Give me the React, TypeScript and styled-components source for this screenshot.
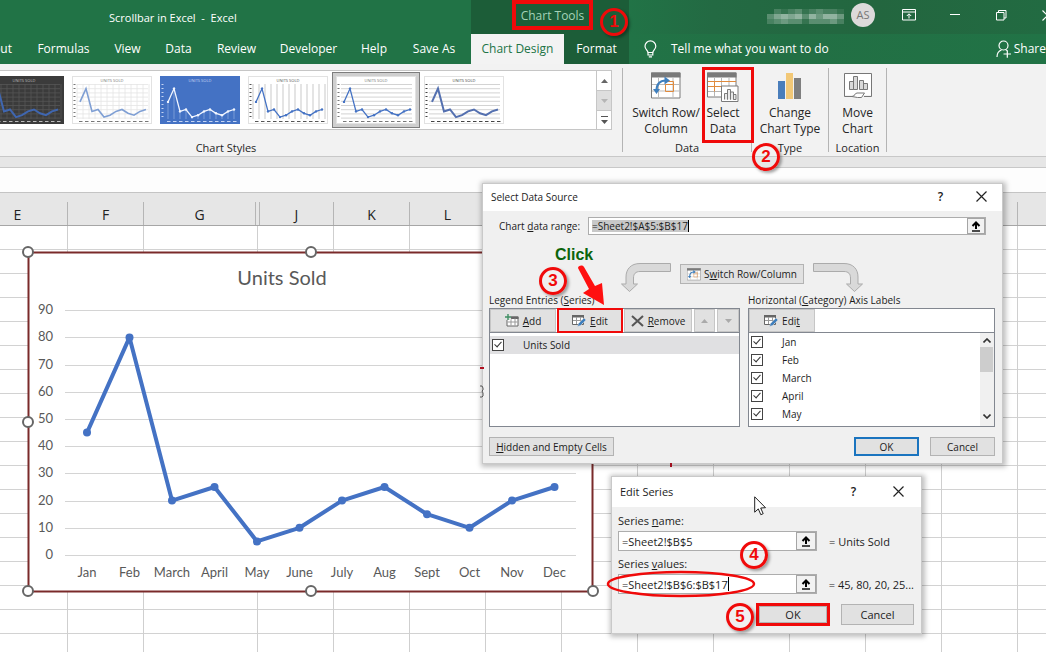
import React from 'react';
import styled, { createGlobalStyle, css } from 'styled-components';

const UI = '"Open Sans", "Noto Sans", sans-serif';
const RED = '#f00a0a';

const GlobalStyle = createGlobalStyle`
  *, *::before, *::after { box-sizing: border-box; }
  body { margin: 0; font-family: ${UI}; font-size: 12px; color: #262626; background: #fff; }
  button, input { font: inherit; color: inherit; margin: 0; }
  svg { display: block; flex: none; }
`;

const Page = styled.main`
  position: relative;
  display: flex;
  flex-direction: column;
  min-height: 100vh;
  overflow: hidden;
`;

/* ---------- title bar and tabs ---------- */

const Header = styled.header`
  display: grid;
  grid-template-columns: 471px 158px 1fr;
  grid-template-rows: 34px 30px;
  background: #217346;
  color: #fff;
`;

const DocTitle = styled.div`
  padding-left: 109px;
  font-size: 11px;
  line-height: 36px;
  white-space: pre;
`;

const ContextTitle = styled.div`
  background: #1c5d38;
  padding-left: 41px;
`;

const MarkedTitle = styled.div`
  width: 81px;
  height: 30px;
  border: 4px solid ${RED};
  color: #a5d3b7;
  font-size: 12px;
  line-height: 23px;
  text-align: center;
  white-space: nowrap;
`;

const WindowBar = styled.div`
  position: relative;
  display: flex;
  justify-content: flex-end;
  align-items: flex-start;
  background: linear-gradient(90deg, #217346, #236a43 20%, #23663f 60%, #226b42);
  overflow: hidden;
`;

const HiddenName = styled.div`
  display: grid;
  grid-template-columns: repeat(11, 7px);
  grid-auto-rows: 5px;
  margin: 9px 7px 0 0;
`;

const Pixel = styled.i<{ $a: number }>`
  background: rgba(255, 255, 255, ${p => p.$a / 12});
`;

const Avatar = styled.div`
  width: 24px;
  height: 24px;
  margin: 3px 11px 0 0;
  border-radius: 50%;
  background: #dcdada;
  color: #777;
  font-size: 11px;
  line-height: 24px;
  text-align: center;
`;

const WindowButtons = styled.div`
  display: flex;
  margin-right: -24px;
`;

const WindowButton = styled.button`
  display: grid;
  place-items: center;
  width: 46px;
  height: 30px;
  padding: 0;
  border: 0;
  background: none;
`;

const Tabs = styled.nav`
  display: grid;
  grid-template-columns: 25px 77px 51px 51px 65px 79px 52px 68px;
`;

const Tab = styled.button<{ $active?: boolean; $end?: boolean }>`
  padding: 0;
  border: 0;
  background: ${p => (p.$active ? '#f3f3f3' : 'none')};
  color: ${p => (p.$active ? '#217346' : '#fff')};
  font-size: 12px;
  line-height: 30px;
  text-align: center;
  white-space: nowrap;
  ${p => p.$end && css`direction: rtl; padding-right: 13px;`}
`;

const ContextTabs = styled.nav`
  display: grid;
  grid-template-columns: 93px 65px;
  background: #1c5d38;
`;

const TellRow = styled.div`
  display: flex;
  align-items: center;
  justify-content: space-between;
  padding-left: 15px;
  background: linear-gradient(90deg, #217346, #226f44 40%, #217346);
  overflow: hidden;
`;

const HeaderButton = styled.button<{ $gap: number }>`
  display: flex;
  align-items: center;
  gap: ${p => p.$gap}px;
  padding: 0;
  border: 0;
  background: none;
  font-size: 12px;
  line-height: 30px;
  white-space: nowrap;
`;

/* ---------- ribbon ---------- */

const Ribbon = styled.section`
  display: flex;
  height: 92px;
  background: #f2f2f2;
  font-size: 11px;
  line-height: 16px;
`;

const StylesGroup = styled.div`
  width: 772px;
  margin-left: -160px;
  margin-right: 10px;
  padding-top: 6px;
  text-align: center;
`;

const Gallery = styled.div`
  display: flex;
  height: 60px;
  margin-bottom: 10px;
  padding: 1px 0 0 139px;
  border: 1px solid #c6c6c6;
  background: #fff;
`;

const Thumb = styled.button<{ $selected?: boolean }>`
  width: 88px;
  height: 56px;
  padding: 3px;
  border: 1px solid ${p => (p.$selected ? '#7d7d7d' : 'transparent')};
  background: ${p => (p.$selected ? '#cfcfcf' : 'none')};
`;

const GalleryScroll = styled.div`
  display: grid;
  grid-template-rows: 20px 20px 18px;
  width: 15px;
  margin: -1px 0 0 auto;
  border-left: 1px solid #c6c6c6;
`;

const ScrollStep = styled.button<{ $shade?: boolean }>`
  display: grid;
  place-items: center;
  padding: 0;
  border: 0;
  border-bottom: 1px solid #c6c6c6;
  background: ${p => (p.$shade ? '#dedede' : '#fff')};
  &:last-child { border-bottom: 0; }
`;

const Divider = styled.div`
  width: 1px;
  height: 84px;
  margin-top: 4px;
  background: #b4b4b4;
`;

const Group = styled.div<{ $w: number }>`
  width: ${p => p.$w}px;
  padding-top: 8px;
  text-align: center;
`;

const GroupTools = styled.div<{ $start?: number }>`
  display: flex;
  justify-content: ${p => (p.$start ? 'flex-start' : 'center')};
  padding-left: ${p => p.$start || 0}px;
  margin-bottom: 3px;
`;

const Tool = styled.button<{ $w: number }>`
  position: relative;
  display: flex;
  flex-direction: column;
  align-items: center;
  gap: 5px;
  width: ${p => p.$w}px;
  padding: 0;
  border: 0;
  background: none;
  font-size: 12px;
  line-height: 16px;
  white-space: pre;
`;

const ToolMark = styled.span`
  position: absolute;
  left: 0;
  top: -5px;
  width: 52px;
  height: 76px;
  border: 3px solid ${RED};
`;

const GreyBand = styled.div`
  height: 12px;
  border: 1px solid #c8c8c8;
  border-width: 1px 0;
  background: #e6e6e6;
`;

const FormulaBar = styled.div`
  height: 24px;
  background: #fdfdfd;
`;

/* ---------- sheet ---------- */

const SHEET_COLUMNS = '68px 76px 114px 76px repeat(20, 76px)';

const ColumnHeads = styled.div`
  display: grid;
  grid-template-columns: ${SHEET_COLUMNS};
  height: 34px;
  padding-top: 9px;
  border: 1px solid #c4c4c4;
  border-width: 1px 0;
  border-bottom-color: #a6a6a6;
  background: #e6e6e6;
  overflow: hidden;
`;

const ColumnHead = styled.div<{ $name?: string }>`
  border-right: 1px solid #b5b5b5;
  color: #222;
  font-size: 14px;
  line-height: 26px;
  text-align: center;
  ${p => p.$name === 'E' && css`padding-right: 32px;`}
  ${p => p.$name === 'G' && css`margin-right: 2px;`}
  ${p => p.$name === 'J' && css`margin-left: 1px; border-left: 1px solid #b5b5b5;`}
`;

const Sheet = styled.section`
  position: relative;
  flex: 1;
  min-height: 420px;
  display: grid;
  grid-template-columns: ${SHEET_COLUMNS};
  background: repeating-linear-gradient(#fff 0 23px, #d2d2d2 23px 24px);
  overflow: hidden;
`;

const SheetColumn = styled.div`
  border-right: 1px solid #cfcfcf;
`;

const ChartFrame = styled.figure`
  position: absolute;
  left: 22px;
  top: 20px;
  margin: 0;
`;

/* ---------- dialogs ---------- */

const Dialog = styled.section<{ $x: number; $y: number; $w: number; $size: number }>`
  position: absolute;
  left: ${p => p.$x}px;
  top: ${p => p.$y}px;
  width: ${p => p.$w}px;
  background: #f0f0f0;
  border: 1px solid #c9c9c9;
  box-shadow: 1px 1px 5px 2px rgba(0, 0, 0, 0.25);
  color: #1c1c1c;
  font-size: ${p => p.$size}px;
  font-weight: ${p => (p.$size < 11 ? 500 : 400)};
`;

const DialogTitle = styled.div<{ $h: number }>`
  display: flex;
  align-items: center;
  height: ${p => p.$h}px;
  padding: 0 0 2px 8px;
  background: #fff;
  font-weight: 400;
`;

const TitleText = styled.h2`
  flex: 1;
  margin: 0;
  font: inherit;
`;

const TitleButton = styled.button<{ $w: number }>`
  display: grid;
  place-items: center;
  width: ${p => p.$w}px;
  height: 22px;
  padding: 0;
  border: 0;
  background: none;
  font-size: 12px;
  font-weight: 600;
`;

const SourceBody = styled.div`
  padding: 6px 7px 7px 6px;
`;

const RangeRow = styled.div`
  display: flex;
  align-items: center;
  height: 18px;
  padding: 0 9px 0 10px;
`;

const RangeLabel = styled.label`
  width: 89px;
`;

const RangeField = styled.div<{ $w?: number; $h: number }>`
  display: flex;
  ${p => (p.$w ? css`width: ${p.$w}px;` : css`flex: 1;`)}
  height: ${p => p.$h}px;
  border: 1px solid #adadad;
  background: #fff;
`;

const SelectedText = styled.div`
  position: relative;
  flex: 1;
  min-width: 0;
`;

const TextInput = styled.input<{ $hl?: boolean }>`
  flex: 1;
  min-width: 0;
  width: 100%;
  height: 100%;
  padding: 0 3px;
  border: 0;
  outline: 0;
  background: ${p =>
    p.$hl ? 'linear-gradient(#c8c8c8, #c8c8c8) 3px 2px / 96px 12px no-repeat' : 'transparent'};
`;

const Caret = styled.i<{ $x: number }>`
  position: absolute;
  left: ${p => p.$x}px;
  top: 2px;
  bottom: 2px;
  width: 1px;
  background: #000;
`;

const PickButton = styled.button<{ $w: number }>`
  display: grid;
  place-items: center;
  width: ${p => p.$w}px;
  padding: 0;
  border: 1px solid #a5a5a5;
  background: #f2f2f2;
`;

const SwitchRow = styled.div`
  display: flex;
  justify-content: center;
  gap: 9px;
  margin-top: 27px;
  height: 30px;
`;

const PlainButton = styled.button<{ $w?: number; $h: number; $default?: boolean; $top?: number }>`
  display: flex;
  align-items: center;
  justify-content: center;
  gap: 3px;
  width: ${p => (p.$w ? `${p.$w}px` : 'auto')};
  height: ${p => p.$h}px;
  margin-top: ${p => p.$top || 0}px;
  padding: 0;
  border: ${p => (p.$default ? '2px solid #1a74bf' : '1px solid #b3b3b3')};
  background: #e1e1e1;
  white-space: nowrap;
`;

const Lists = styled.div`
  display: grid;
  grid-template-columns: 251px 1fr;
  column-gap: 8px;
  margin-top: 1px;
`;

const ListLabel = styled.div`
  line-height: 15px;
  white-space: nowrap;
`;

const Panel = styled.div`
  height: 119px;
  border: 1px solid #828790;
  background: #fff;
`;

const PanelTools = styled.div`
  display: flex;
  gap: 2px;
  height: 24px;
  border-bottom: 1px solid #828790;
`;

const PanelButton = styled.button<{ $w: number; $mark?: boolean }>`
  display: flex;
  align-items: center;
  justify-content: center;
  gap: 4px;
  width: ${p => p.$w}px;
  height: 23px;
  padding: 0;
  border: 1px solid #c6c6c6;
  background: #e1e1e1;
  ${p => p.$mark && css`outline: 2px solid ${RED}; outline-offset: -1px;`}
`;

const CheckRow = styled.label<{ $on?: boolean }>`
  display: flex;
  align-items: center;
  gap: 19px;
  height: 18px;
  padding-left: 2px;
  background: ${p => (p.$on ? '#e0e0e2' : 'none')};
`;

const Check = styled.input`
  appearance: none;
  position: relative;
  width: 12px;
  height: 12px;
  border: 1px solid #444;
  background: #fff;
  &::after {
    content: '';
    position: absolute;
    left: 3px;
    top: 0;
    width: 4px;
    height: 7px;
    border: solid #333;
    border-width: 0 1px 1px 0;
    transform: rotate(42deg);
  }
`;

const SeriesRows = styled.div`
  padding-top: 3px;
`;

const AxisRows = styled.div`
  display: grid;
  grid-template-columns: 1fr 14px;
  height: 93px;
`;

const ScrollBar = styled.div`
  display: flex;
  flex-direction: column;
  align-items: center;
  justify-content: space-between;
  padding: 5px 0 7px;
  background: linear-gradient(#cdcdcd, #cdcdcd) 0 14px / 13px 25px no-repeat #f0f0f0;
`;

const Footer = styled.div`
  display: flex;
  gap: 11px;
  margin-top: 10px;
`;

const Spacer = styled.span`
  flex: 1;
`;

const SeriesBody = styled.div`
  padding: 5px 7px 8px 6px;
`;

const FieldLabel = styled.label`
  display: block;
  height: 19px;
  line-height: 18px;
`;

const FieldRow = styled.div`
  display: flex;
  align-items: center;
  gap: 12px;
  height: 20px;
  margin-bottom: 4px;
  white-space: nowrap;
`;

const OkMark = styled.div`
  margin: -1px 0;
  border: 3px solid ${RED};
`;

/* ---------- annotations ---------- */

const Badge = styled.b<{ $x: number; $y: number }>`
  position: absolute;
  left: ${p => p.$x - 14}px;
  top: ${p => p.$y - 14}px;
  width: 28px;
  height: 28px;
  border: 3px solid ${RED};
  border-radius: 50%;
  box-shadow: 2px 2px 3px rgba(0, 0, 0, 0.35);
  color: ${RED};
  font: bold 17px/22px "Liberation Sans", Arial, sans-serif;
  text-align: center;
`;

const ClickNote = styled.b`
  position: absolute;
  left: 555px;
  top: 246px;
  color: #0b640b;
  font: bold 16px/18px "Liberation Sans", Arial, sans-serif;
`;

const Overlay = styled.svg<{ $x: number; $y: number }>`
  position: absolute;
  left: ${p => p.$x}px;
  top: ${p => p.$y}px;
  overflow: visible;
  pointer-events: none;
`;

/* ---------- data ---------- */

const SALES: [string, number][] = [
  ['Jan', 45], ['Feb', 80], ['March', 20], ['April', 25], ['May', 5], ['June', 10],
  ['July', 20], ['Aug', 25], ['Sept', 15], ['Oct', 10], ['Nov', 20], ['Dec', 25],
];

const NAME_PIXELS = [
  0, 2, 1, 2, 3, 1, 2, 3, 2, 2, 1,
  3, 5, 6, 5, 6, 3, 6, 4, 6, 6, 4,
  2, 3, 4, 3, 3, 1, 3, 3, 3, 4, 2,
];

type ThumbLook = {
  bg: string; line: string; title: string; grid: string; dots?: boolean;
  vertical?: boolean; horizontal?: boolean; drops?: boolean; width: number; selected?: boolean;
};

const THUMBS: ThumbLook[] = [
  { bg: '#3b3b3b', line: '#3f66b0', title: '#bbb', grid: '#555', vertical: true, horizontal: true, width: 2 },
  { bg: '#fff', line: '#7f9fd4', title: '#777', grid: '#e4e4e4', vertical: true, horizontal: true, width: 1.6 },
  { bg: '#4472c4', line: '#f2f6ff', title: '#c5d4f2', grid: '#86a5dc', drops: true, dots: true, width: 1.3 },
  { bg: '#fff', line: '#4472c4', title: '#555', grid: '#bbb', vertical: true, dots: true, width: 1.3 },
  { bg: '#fff', line: '#4472c4', title: '#777', grid: '#c8c8c8', horizontal: true, dots: true, width: 1.3, selected: true },
  { bg: '#fff', line: '#5470b0', title: '#444', grid: '#c8c8c8', horizontal: true, width: 2 },
];

const ThumbChart = ({ look }: { look: ThumbLook }) => {
  const pts = SALES.map(([, v], i) => [8 + i * 6, 43 - v * 0.38]);
  return (
    <svg width="80" height="48" viewBox="0 0 80 48">
      <rect width="80" height="48" fill={look.bg} />
      <rect x="0.5" y="0.5" width="79" height="47" fill="none" stroke={look.bg === '#fff' ? '#e2e2e2' : look.bg} />
      {look.horizontal && Array.from({ length: 9 }, (_, i) => (
        <line key={i} x1="5" x2="76" y1={8.5 + i * 4.2} y2={8.5 + i * 4.2} stroke={look.grid} strokeWidth="0.8" />
      ))}
      {look.vertical && Array.from({ length: 13 }, (_, i) => (
        <line key={i} x1={5 + i * 6} x2={5 + i * 6} y1="8" y2="43" stroke={look.grid} strokeWidth="0.8" />
      ))}
      {look.drops && pts.map(([x, y]) => (
        <line key={x} x1={x} x2={x} y1={y} y2="43" stroke={look.grid} strokeWidth="0.8" />
      ))}
      <line x1="2.5" x2="2.5" y1="8" y2="44" stroke={look.title} strokeWidth="2" strokeDasharray="1 3" />
      <line x1="7" x2="78" y1="45.5" y2="45.5" stroke={look.title} strokeWidth="1" strokeDasharray="3.5 2.5" />
      <text x="40" y="5.6" textAnchor="middle" fontSize="4" fill={look.title}>UNITS SOLD</text>
      <polyline points={pts.map(p => p.join(',')).join(' ')} fill="none" stroke={look.line} strokeWidth={look.width} />
      {look.dots && pts.map(([x, y]) => <circle key={x} cx={x} cy={y} r="1.2" fill={look.line} />)}
    </svg>
  );
};

/* ---------- icons ---------- */

const Bulb = () => (
  <svg width="13" height="18" viewBox="0 0 13 18" fill="none" stroke="#fff" strokeWidth="1.2">
    <path d="M4 12.5c0-2-3-3-3-6.200a5.300 5.300 0 0 1 10.800 0c0 3.200-3 4.200-3 6.200z" />
    <path d="M4 12.500v2.500h4.800v-2.500M4.800 16.800h3.200" />
  </svg>
);

const ShareIcon = () => (
  <svg width="16" height="18" viewBox="0 0 16 18" fill="none" stroke="#fff" strokeWidth="1.2">
    <circle cx="7.500" cy="5.500" r="4.500" />
    <path d="M1 17c0-4 2-6.200 4.500-7M9.500 9.500l1.500 1M7.500 14h7.500M11.300 10.300v7.500" />
  </svg>
);

const DisplayIcon = () => (
  <svg width="14" height="12" viewBox="0 0 14 12" fill="none" stroke="#fff">
    <path d="M.5.5h13v10.500H.5zM.5 3h13M7 9.500V5M4.800 7L7 4.800 9.200 7" />
  </svg>
);

const MinIcon = () => (
  <svg width="10" height="10" viewBox="0 0 10 10" stroke="#fff"><path d="M0 4.500h10" /></svg>
);

const RestoreIcon = () => (
  <svg width="11" height="11" viewBox="0 0 11 11" fill="none" stroke="#fff">
    <path d="M.5 2.500h7.500v7.500H.5zM2.500 2.500V.5h7.500v7.500H8" />
  </svg>
);

const CloseIcon = ({ color = '#fff' }: { color?: string }) => (
  <svg width="11" height="11" viewBox="0 0 11 11" stroke={color} strokeWidth="1.2"><path d="M.5.5l10 10M10.500.5l-10 10" /></svg>
);

const SwitchIcon = ({ small }: { small?: boolean }) => (
  <svg width={small ? 14 : 30} height={small ? 13 : 28} viewBox="0 0 30 28" fill="none">
    <path d="M.5 1h28.500v25H.5z" fill="#fff" stroke="#7a7a7a" />
    <path d="M0 .5h29.500v5H0z" fill="#7a7a7a" />
    <path d="M7.500 6v19M14.500 6v4M22 6v19M1 12.500h28M1 19h28" stroke="#bbb" />
    <path d="M14.500 12.500v7h8v-7zM14.500 9.500h8v3" stroke="#e08a3c" />
    <path d="M5.500 19C5.500 12 9 8.500 15 8.500" stroke="#3f7fbd" strokeWidth="2.200" />
    <path d="M13.500 4.500l5.500 4-5.500 4zM2 17l3.500 5 3.500-5z" fill="#3f7fbd" />
  </svg>
);

const SelectIcon = () => (
  <svg width="32" height="28" viewBox="0 0 32 28" fill="none" overflow="visible">
    <path d="M.5 1h28.500v24H.5z" fill="#fff" stroke="#7a7a7a" />
    <path d="M0 .5h29.500v5H0z" fill="#7a7a7a" />
    <path d="M7.500 6v19M14.500 6v19M22 6v19M1 19.500h28" stroke="#b5b5b5" />
    <path d="M1 9.500h28M7.500 9.500v10M1 14.500h28" stroke="#e08a3c" />
    <path d="M14.500 14h16.500v15.500h-16.500z" fill="#fff" stroke="#7a7a7a" />
    <path d="M17.500 27.500v-6h3v6M20.500 27.500V17.500h3v10M23.500 27.500v-7.500h3v7.500M26.500 27.500v-5h2.500v5z" stroke="#7a7a7a" fill="#e9e9e9" />
  </svg>
);

const TypeIcon = () => (
  <svg width="24" height="28" viewBox="0 0 24 28">
    <path d="M0 9h7v18H0z" fill="#4a7ebb" /><path d="M8 1h7v26H8z" fill="#f2c877" /><path d="M16 6h7v21h-7z" fill="#7f7f7f" />
  </svg>
);

const MoveIcon = () => (
  <svg width="28" height="28" viewBox="0 0 28 28" fill="none" stroke="#777">
    <path d="M1 2h26v21H1z" fill="#fff" stroke="none" />
    <path d="M8 24.500H.5v-23h27v23H20" />
    <path d="M5.500 17.500v-8h4v8zM9.500 17.500V4.500h4v13zM15.500 17.500V8.500h4v9zM19.500 17.500v-6h4v6z" fill="#d9d9d9" />
    <path d="M8 24.500c3 0 2-3 5-3.500h7.500l-3 4.500h-4z" fill="#fff" />
  </svg>
);

const Tri = ({ down, color = '#666' }: { down?: boolean; color?: string }) => (
  <svg width="7" height="4" viewBox="0 0 7 4"><path d={down ? 'M0 0h7L3.500 4z' : 'M0 4h7L3.500 0z'} fill={color} /></svg>
);

const TableGrid = () => (
  <>
    <path d="M.5 1.500h11v9H.5z" fill="#fff" stroke="#666" />
    <path d="M0 1h12v2.500H0z" fill="#666" />
    <path d="M4.500 3v7M8.500 3v7M1 6.500h10" stroke="#999" />
  </>
);

const AddIcon = () => (
  <svg width="14" height="13" viewBox="0 0 14 13">
    <g transform="translate(1.500 1.500)"><TableGrid /></g>
    <path d="M0 0h6v6H0z" fill="#e1e1e1" />
    <path d="M3 0v6M0 3h6" stroke="#3f8f63" strokeWidth="1.400" />
  </svg>
);

const EditIcon = () => (
  <svg width="14" height="13" viewBox="0 0 14 13">
    <TableGrid />
    <path d="M5.500 12.500l1-3 5.500-5.500 2 2-5.500 5.500z" fill="#3f7fbd" stroke="#e1e1e1" strokeWidth=".5" />
  </svg>
);

const RemoveIcon = () => (
  <svg width="13" height="12" viewBox="0 0 13 12" stroke="#555" strokeWidth="2"><path d="M1 1l11 10M12 1L1 11" /></svg>
);

const PickIcon = () => (
  <svg width="10" height="11" viewBox="0 0 10 11" fill="none" stroke="#000" strokeWidth="2">
    <path d="M5 8V2M1.500 5L5 1.500 8.500 5" /><path d="M1 10h8" strokeWidth="1.400" />
  </svg>
);

const CurvedArrow = ({ flip }: { flip?: boolean }) => (
  <svg width="50" height="30" viewBox="0 0 50 30">
    <path
      transform={flip ? 'translate(50 0) scale(-1 1)' : undefined}
      d="M49.500 1.500H19C10 1.500 5 7 5 15v7H.5L8.500 29.500 16.500 22H12.500v-6c0-4 2-6.500 6.500-6.500h30.500z"
      fill="#d9d9d9" stroke="#ababab"
    />
  </svg>
);

const Chevron = ({ down }: { down?: boolean }) => (
  <svg width="8" height="5" viewBox="0 0 8 5" fill="none" stroke="#333" strokeWidth="1.600">
    <path d={down ? 'M.5.5L4 4 7.500.5' : 'M.5 4.500L4 1l3.500 3.500'} />
  </svg>
);

/* Chart drawing; its origin is 22px from the left and 20px from the top of the sheet. */
const SalesChart = () => {
  const y = (v: number) => 309 - v * 2.72;
  const x = (i: number) => 65 + i * 42.5;
  const pts = SALES.map(([, v], i) => [x(i), y(v)]);
  return (
    <svg width="582" height="352" viewBox="0 0 582 352" role="img" aria-label="Units Sold" fontFamily="Lato, sans-serif" fill="#595959">
      <rect x="6.500" y="6.500" width="564" height="339" fill="#fff" stroke="#7a2a2a" strokeWidth="2" />
      <text x="260" y="39" fontSize="20" textAnchor="middle">Units Sold</text>
      {Array.from({ length: 10 }, (_, i) => (
        <g key={i}>
          <line x1="43" x2="554" y1={Math.round(y(i * 10)) + 0.5} y2={Math.round(y(i * 10)) + 0.5} stroke="#d4d4d4" />
          <text x="31" y={y(i * 10) + 4} fontSize="13" textAnchor="end">{i * 10}</text>
        </g>
      ))}
      {SALES.map(([m], i) => <text key={m} x={x(i)} y="331" fontSize="13" textAnchor="middle">{m}</text>)}
      <polyline points={pts.map(p => p.join(',')).join(' ')} fill="none" stroke="#4472c4" strokeWidth="4" strokeLinejoin="round" />
      {pts.map(([px, py]) => <circle key={px} cx={px} cy={py} r="4" fill="#4472c4" />)}
      {[[6, 6], [289, 6], [6, 176], [6, 345], [289, 345], [571, 345]].map(([cx, cy]) => (
        <circle key={`${cx}-${cy}`} cx={cx} cy={cy} r="5" fill="#fff" stroke="#666" strokeWidth="2" />
      ))}
    </svg>
  );
};

const HEADS = ['E', 'F', 'G', 'J', 'K', 'L'];

export default function App() {
  return (
    <>
      <GlobalStyle />
      <Page>
        <Header>
          <DocTitle>{'Scrollbar in Excel  -  Excel'}</DocTitle>
          <ContextTitle><MarkedTitle>Chart Tools</MarkedTitle></ContextTitle>
          <WindowBar>
            <HiddenName aria-hidden="true">
              {NAME_PIXELS.map((a, i) => <Pixel key={i} $a={a} />)}
            </HiddenName>
            <Avatar>AS</Avatar>
            <WindowButtons>
              <WindowButton aria-label="Ribbon display options"><DisplayIcon /></WindowButton>
              <WindowButton aria-label="Minimize"><MinIcon /></WindowButton>
              <WindowButton aria-label="Restore"><RestoreIcon /></WindowButton>
              <WindowButton aria-label="Close"><CloseIcon /></WindowButton>
            </WindowButtons>
          </WindowBar>
          <Tabs>
            <Tab $end>out</Tab>
            {['Formulas', 'View', 'Data', 'Review', 'Developer', 'Help', 'Save As'].map(t => <Tab key={t}>{t}</Tab>)}
          </Tabs>
          <ContextTabs>
            <Tab $active>Chart Design</Tab>
            <Tab>Format</Tab>
          </ContextTabs>
          <TellRow>
            <HeaderButton $gap={14}><Bulb />Tell me what you want to do</HeaderButton>
            <HeaderButton $gap={2}><ShareIcon />Share</HeaderButton>
          </TellRow>
        </Header>

        <Ribbon>
          <StylesGroup>
            <Gallery>
              {THUMBS.map((t, i) => (
                <Thumb key={i} $selected={t.selected} aria-label={`Chart style ${i + 1}`}><ThumbChart look={t} /></Thumb>
              ))}
              <GalleryScroll>
                <ScrollStep aria-label="Previous styles"><Tri /></ScrollStep>
                <ScrollStep $shade aria-label="Next styles"><Tri down color="#b5b5b5" /></ScrollStep>
                <ScrollStep aria-label="More styles">
                  <svg width="7" height="8" viewBox="0 0 7 8" fill="#555"><path d="M0 0h7v1H0zM0 4h7L3.500 8z" /></svg>
                </ScrollStep>
              </GalleryScroll>
            </Gallery>
            Chart Styles
          </StylesGroup>
          <Divider />
          <Group $w={128}>
            <GroupTools $start={7}>
              <Tool $w={72}><SwitchIcon />{'Switch Row/\nColumn'}</Tool>
              <Tool $w={42}><SelectIcon />{'Select\nData'}<ToolMark /></Tool>
            </GroupTools>
            Data
          </Group>
          <Divider />
          <Group $w={76}>
            <GroupTools><Tool $w={72}><TypeIcon />{'Change\nChart Type'}</Tool></GroupTools>
            Type
          </Group>
          <Divider />
          <Group $w={57}>
            <GroupTools><Tool $w={50}><MoveIcon />{'Move\nChart'}</Tool></GroupTools>
            Location
          </Group>
          <Divider />
        </Ribbon>
        <GreyBand />
        <FormulaBar />

        <ColumnHeads>
          {HEADS.map(h => <ColumnHead key={h} $name={h}>{h}</ColumnHead>)}
          {Array.from({ length: 18 }, (_, i) => <ColumnHead key={i} />)}
        </ColumnHeads>
        <Sheet>
          {Array.from({ length: 24 }, (_, i) => <SheetColumn key={i} />)}
          <ChartFrame><SalesChart /></ChartFrame>
        </Sheet>

        <Dialog $x={482} $y={183} $w={521} $size={10} role="dialog" aria-label="Select Data Source">
          <DialogTitle $h={27}>
            <TitleText>Select Data Source</TitleText>
            <TitleButton $w={41} aria-label="Help">?</TitleButton>
            <TitleButton $w={41} aria-label="Close"><CloseIcon color="#222" /></TitleButton>
          </DialogTitle>
          <SourceBody>
            <RangeRow>
              <RangeLabel htmlFor="range">Chart <u>d</u>ata range:</RangeLabel>
              <RangeField $h={18}>
                <SelectedText>
                  <TextInput id="range" $hl defaultValue="=Sheet2!$A$5:$B$17" />
                  <Caret $x={99} />
                </SelectedText>
                <PickButton $w={18} aria-label="Pick data range"><PickIcon /></PickButton>
              </RangeField>
            </RangeRow>
            <SwitchRow>
              <CurvedArrow />
              <PlainButton $w={124} $h={20} $top={2}><SwitchIcon small /><span>S<u>w</u>itch Row/Column</span></PlainButton>
              <CurvedArrow flip />
            </SwitchRow>
            <Lists>
              <div>
                <ListLabel>Legend Entries (<u>S</u>eries)</ListLabel>
                <Panel>
                  <PanelTools>
                    <PanelButton $w={66}><AddIcon /><span><u>A</u>dd</span></PanelButton>
                    <PanelButton $w={64} $mark><EditIcon /><span><u>E</u>dit</span></PanelButton>
                    <PanelButton $w={68}><RemoveIcon /><span><u>R</u>emove</span></PanelButton>
                    <PanelButton $w={21} aria-label="Move up"><Tri color="#aaa" /></PanelButton>
                    <PanelButton $w={22} aria-label="Move down"><Tri down color="#aaa" /></PanelButton>
                  </PanelTools>
                  <SeriesRows>
                    <CheckRow $on><Check type="checkbox" defaultChecked />Units Sold</CheckRow>
                  </SeriesRows>
                </Panel>
              </div>
              <div>
                <ListLabel>Horizontal (<u>C</u>ategory) Axis Labels</ListLabel>
                <Panel>
                  <PanelTools>
                    <PanelButton $w={66}><EditIcon /><span>Edi<u>t</u></span></PanelButton>
                  </PanelTools>
                  <AxisRows>
                    <div>
                      {SALES.slice(0, 5).map(([m]) => (
                        <CheckRow key={m}><Check type="checkbox" defaultChecked />{m}</CheckRow>
                      ))}
                    </div>
                    <ScrollBar><Chevron /><Chevron down /></ScrollBar>
                  </AxisRows>
                </Panel>
              </div>
            </Lists>
            <Footer>
              <PlainButton $w={125} $h={19}><span><u>H</u>idden and Empty Cells</span></PlainButton>
              <Spacer />
              <PlainButton $w={65} $h={19} $default>OK</PlainButton>
              <PlainButton $w={65} $h={19}>Cancel</PlainButton>
            </Footer>
          </SourceBody>
        </Dialog>

        <Dialog $x={611} $y={476} $w={311} $size={11} role="dialog" aria-label="Edit Series">
          <DialogTitle $h={30}>
            <TitleText>Edit Series</TitleText>
            <TitleButton $w={45} aria-label="Help">?</TitleButton>
            <TitleButton $w={45} aria-label="Close"><CloseIcon color="#222" /></TitleButton>
          </DialogTitle>
          <SeriesBody>
            <FieldLabel htmlFor="name">Series <u>n</u>ame:</FieldLabel>
            <FieldRow>
              <RangeField $w={199} $h={20}>
                <TextInput id="name" defaultValue="=Sheet2!$B$5" />
                <PickButton $w={20} aria-label="Pick series name"><PickIcon /></PickButton>
              </RangeField>
              = Units Sold
            </FieldRow>
            <FieldLabel htmlFor="values">Series <u>v</u>alues:</FieldLabel>
            <FieldRow>
              <RangeField $w={199} $h={20}>
                <SelectedText>
                  <TextInput id="values" defaultValue="=Sheet2!$B$6:$B$17" />
                  <Caret $x={109} />
                </SelectedText>
                <PickButton $w={20} aria-label="Pick series values"><PickIcon /></PickButton>
              </RangeField>
              = 45, 80, 20, 25...
            </FieldRow>
            <Footer>
              <Spacer />
              <OkMark><PlainButton $w={68} $h={17}>OK</PlainButton></OkMark>
              <PlainButton $w={73} $h={21}>Cancel</PlainButton>
            </Footer>
          </SeriesBody>
        </Dialog>

        <Badge $x={614} $y={22}>1</Badge>
        <Badge $x={766} $y={157}>2</Badge>
        <Badge $x={553} $y={281}>3</Badge>
        <Badge $x={754} $y={555}>4</Badge>
        <Badge $x={740} $y={617}>5</Badge>
        <ClickNote>Click</ClickNote>
        <Overlay $x={576} $y={264} width="32" height="44" viewBox="0 0 32 44">
          <path d="M2 4c0-2 4-4 6-1l11 19 7-3 2 22-21-12 6-4L3 6z" fill="#ff1010" />
        </Overlay>
        <Overlay $x={606} $y={571} width="150" height="26" viewBox="0 0 150 26">
          <ellipse cx="75" cy="13" rx="73" ry="12" fill="none" stroke={RED} strokeWidth="2.500" />
        </Overlay>
        <Overlay $x={754} $y={496} width="13" height="20" viewBox="0 0 13 20">
          <path d="M.7.8v15.400l3.600-3.300 2.500 5.800 2.400-1-2.500-5.700 4.800-.3z" fill="#fff" stroke="#222" />
        </Overlay>
        <Overlay $x={480} $y={366} width="4" height="32" viewBox="0 0 4 32">
          <path d="M0 2h4" stroke="#b01020" strokeWidth="2" />
          <path d="M0 20h2l1 2v2l-1 1 1 2v3l-1 1H0" fill="none" stroke="#555" />
        </Overlay>
        <Overlay $x={670} $y={463} width="2" height="4" viewBox="0 0 2 4">
          <path d="M1 0v4" stroke="#a01020" strokeWidth="2" />
        </Overlay>
      </Page>
    </>
  );
}
